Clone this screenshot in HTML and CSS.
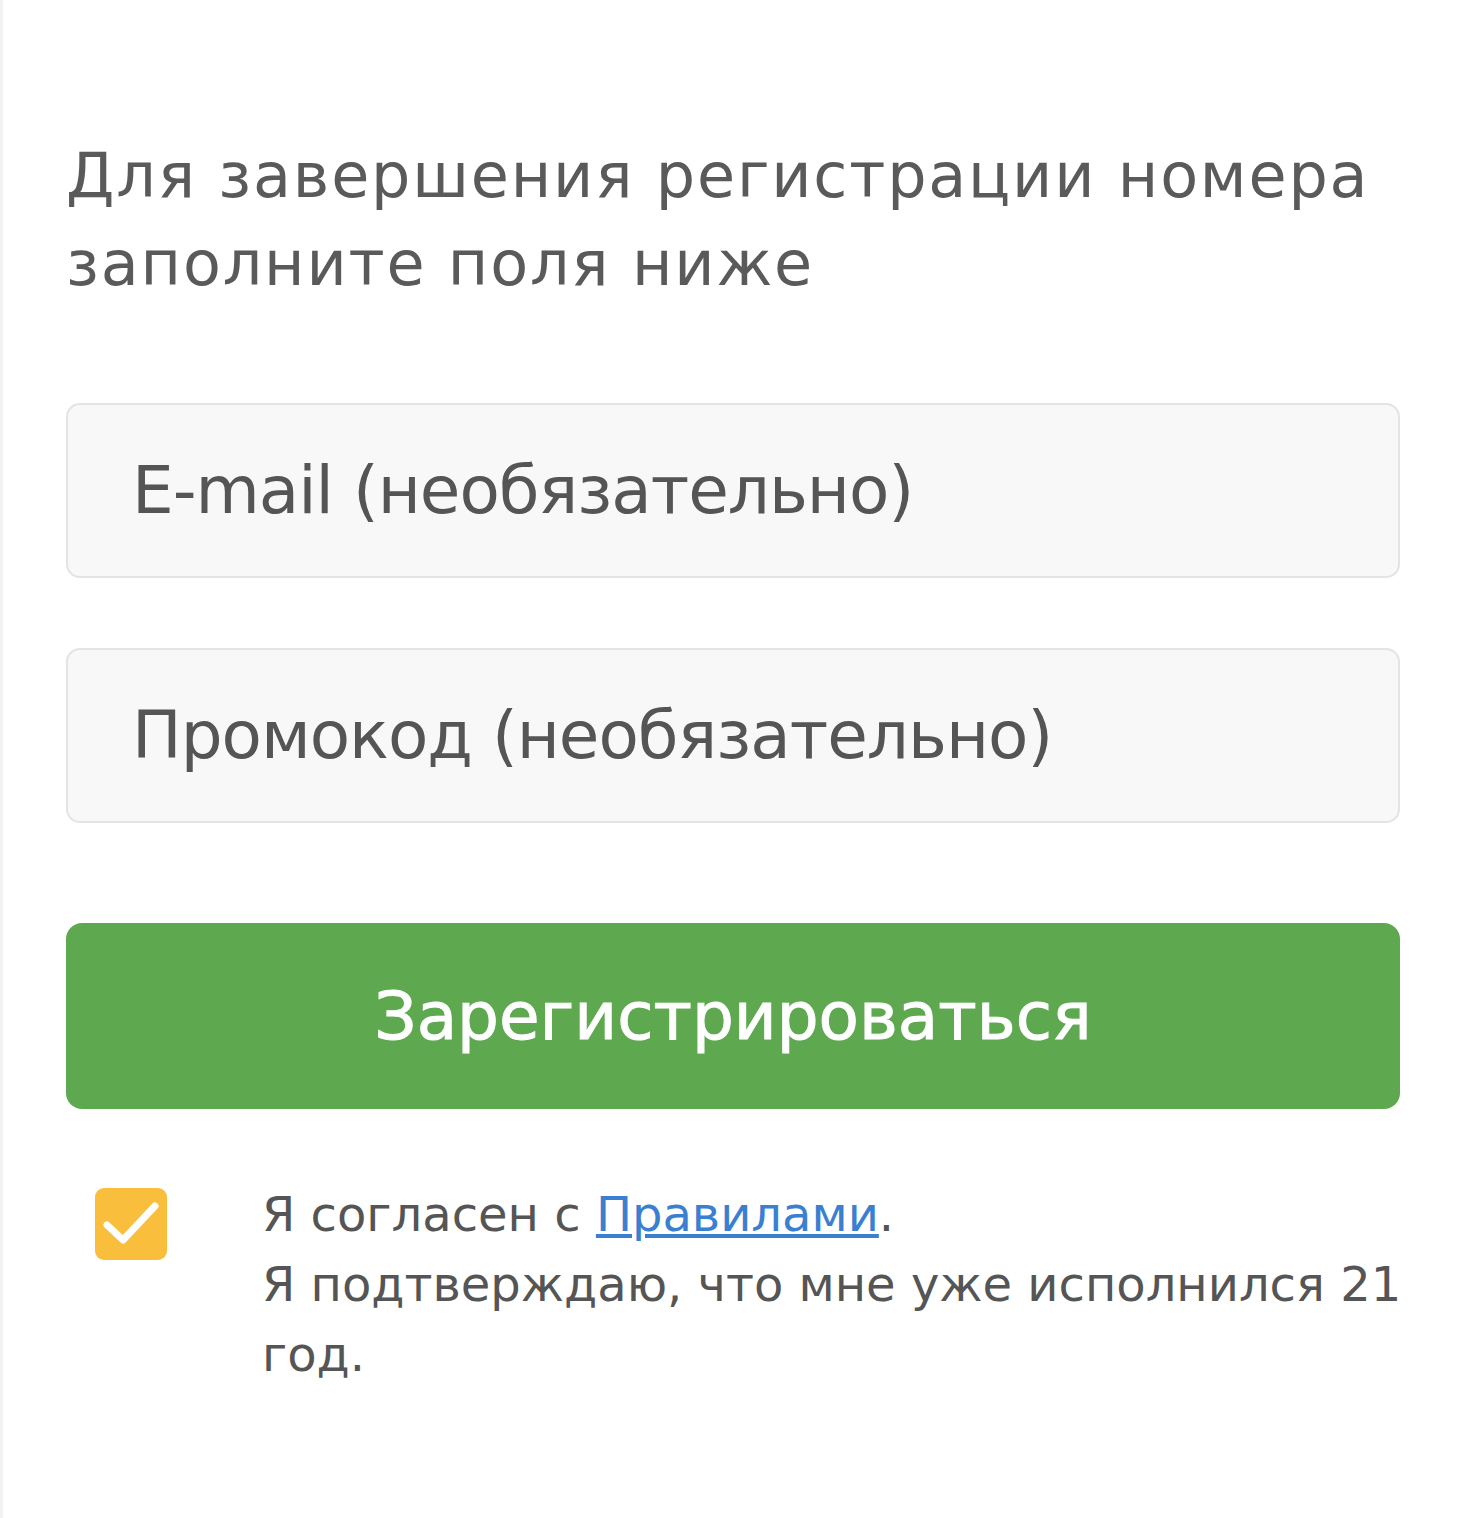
FILE: index.html
```html
<!DOCTYPE html>
<html>
<head>
    <title>Регистрация</title>
    <meta name="viewport" content="width=device-width, initial-scale=1.0">
    <meta charset="utf-8">
    <link rel="stylesheet" href="styles.css">
</head>

<body>
    <div class="page">
        <h1 class="title">Для завершения регистрации номера заполните поля ниже</h1>

        <form class="reg-form" onsubmit="return false">
            <input type="email" class="field" name="email" placeholder="E-mail (необязательно)">
            <input type="text" class="field" name="promo" placeholder="Промокод (необязательно)">
            <button type="submit" class="btn">Зарегистрироваться</button>

            <label class="agree">
                <span class="check">
                    <svg viewBox="0 0 72 72" width="72" height="72">
                        <polyline points="12,37 28,52 60,18" fill="none" stroke="#fff" stroke-width="7" stroke-linecap="round" stroke-linejoin="round"/>
                    </svg>
                </span>
                <span class="agree-text">
                    Я согласен с <a href="#" class="rules">Правилами</a>.<br>
                    Я подтверждаю, что мне уже исполнился 21 год.
                </span>
            </label>
        </form>
    </div>
</body>
</html>
```

FILE: styles.css
```css
*{
    box-sizing: border-box;
}

body{
    margin: 0;
    background: #fff;
    border-left: 3px solid #f2f2f2;
    min-height: 100vh;
    font-family: 'DejaVu Sans', 'Liberation Sans', sans-serif;
    color: #555;
}

.page{
    padding: 132px 60px 0 63px;
}

.title{
    margin: 0;
    font-size: 62px;
    line-height: 88px;
    font-weight: normal;
    letter-spacing: 1.8px;
    color: #5a5a5a;
}

.reg-form{
    display: flex;
    flex-direction: column;
    margin-top: 95px;
}

.field{
    height: 175px;
    margin-bottom: 70px;
    padding: 0 0 0 64px;
    background: #f8f8f8;
    border: 2px solid #e4e4e4;
    border-radius: 14px;
    font-family: inherit;
    font-size: 66px;
    letter-spacing: -1px;
    color: #555;
    outline: none;
}

.field::placeholder{
    color: #555;
}

.btn{
    height: 186px;
    margin-top: 30px;
    background: #5ea84f;
    border: none;
    border-radius: 16px;
    color: #fff;
    font-family: inherit;
    font-size: 66px;
    -webkit-text-stroke: 1px #fff;
    cursor: pointer;
}

.agree{
    display: flex;
    align-items: flex-start;
    gap: 95px;
    margin: 70px -34px 0 0;
    padding-left: 29px;
}

.check{
    flex: none;
    width: 72px;
    height: 72px;
    margin-top: 9px;
    background: #f9be3b;
    border-radius: 9px;
}

.check svg{
    display: block;
}

.agree-text{
    font-size: 48px;
    line-height: 70px;
    color: #555;
}

.rules{
    color: #3b80d0;
    text-decoration: underline;
}
```
